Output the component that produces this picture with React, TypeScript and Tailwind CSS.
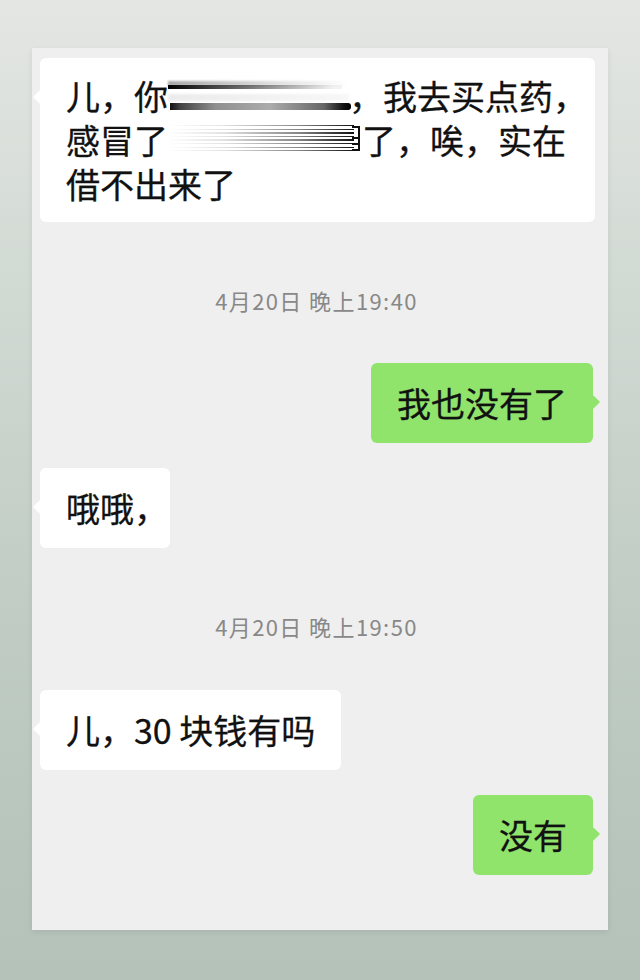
import type { ReactNode } from "react";

// smeared-out part of the first line (two motion-blurred strokes)
const SmearOne = () => (
  <span className="relative inline-block h-[44px] w-[181px] align-top">
    <span className="absolute left-0 top-[7px] h-[5px] w-full bg-[linear-gradient(90deg,rgba(0,0,0,0.35)_0%,rgba(0,0,0,0.12)_60%,transparent_100%)] blur-[1px]" />
    <span className="absolute left-0 top-[11px] h-[4px] w-[96%] bg-[linear-gradient(90deg,#000_0%,#333_20%,rgba(0,0,0,0.4)_60%,rgba(0,0,0,0.05)_95%)] blur-[0.4px]" />
    <span className="absolute left-0 top-[20px] h-[7px] w-full bg-[linear-gradient(90deg,rgba(0,0,0,0.08)_0%,rgba(0,0,0,0.03)_100%)] blur-[1px]" />
    <span className="absolute left-[2px] top-[29px] h-[7px] w-full rounded-r-[3px] bg-[linear-gradient(90deg,#111_0%,#444_6%,#8f8f8f_25%,#acacac_55%,#666_85%,#111_96%,#000_100%)] blur-[0.5px]" />
  </span>
);

// smeared-out part of the second line (thin horizontal streaks)
const SmearTwo = () => (
  <span className="relative inline-block h-[44px] w-[194px] align-top">
    <span className="absolute left-0 top-[7px] h-[26px] w-[186px] bg-[repeating-linear-gradient(180deg,#111_0px,#111_1.5px,transparent_1.5px,transparent_3.6px)] [mask-image:linear-gradient(90deg,transparent_0%,rgba(0,0,0,0.12)_30%,rgba(0,0,0,0.5)_70%,#000_100%)]" />
    <span className="absolute left-[184px] top-[8px] h-[25px] w-[8px] border-r-[2px] border-y-[2px] border-[#111] bg-[linear-gradient(180deg,transparent_0px,transparent_9px,#111_9px,#111_11px,transparent_11px,transparent_15px,#111_15px,#111_17px,transparent_17px)]" />
  </span>
);

const Bubble = ({
  side,
  children,
  className = "",
}: {
  side: "left" | "right";
  children: ReactNode;
  className?: string;
}) => {
  const green = side === "right";
  return (
    <div className={`flex ${green ? "justify-end" : "justify-start"}`}>
      <div
        className={`relative rounded-[6px] px-[26px] text-[34px] leading-[44px] text-[#111] [-webkit-text-stroke:0.3px_#111] ${
          green ? "bg-[#90e46c]" : "bg-white"
        } ${className}`}
      >
        <span
          className={`absolute top-[39px] h-[10px] w-[10px] -translate-y-1/2 rotate-45 rounded-[1px] ${
            green ? "right-[-5px] bg-[#90e46c]" : "left-[-5px] bg-white"
          }`}
        />
        <div className="relative whitespace-nowrap">{children}</div>
      </div>
    </div>
  );
};

const Stamp = ({ text, className = "" }: { text: string; className?: string }) => (
  <div className={`text-center text-[22px] leading-[24px] tracking-[1.4px] text-[#888] ${className}`}>
    {text}
  </div>
);

export default function App() {
  return (
    <div className="h-[980px] w-[640px] overflow-hidden bg-[linear-gradient(180deg,#e4e6e3_0%,#d2dad4_28%,#bfcbc3_65%,#b4c2b9_100%)] px-[32px] pt-[48px] font-['Noto_Sans_CJK_SC','Noto_Sans',sans-serif]">
      <div className="flex h-[882px] w-[576px] flex-col bg-[#efefef] pl-[8px] pr-[15px] pt-[10px] shadow-[0_2px_6px_rgba(0,0,0,0.08)]">
        <Bubble side="left" className="w-[555px] py-[16px]">
          儿，你<SmearOne />，我去买点药，
          <br />
          感冒了<SmearTwo />了，唉，实在
          <br />
          借不出来了
        </Bubble>

        <Stamp text="4月20日 晚上19:40" className="mt-[66px]" />

        <div className="mt-[51px]">
          <Bubble side="right" className="py-[18px]">
            我也没有了
          </Bubble>
        </div>

        <div className="mt-[25px]">
          <Bubble side="left" className="py-[18px]">
            哦哦<span className="inline-block w-[10px]">，</span>
          </Bubble>
        </div>

        <Stamp text="4月20日 晚上19:50" className="mt-[66px]" />

        <div className="mt-[52px]">
          <Bubble side="left" className="py-[18px]">
            儿，30 块钱有吗
          </Bubble>
        </div>

        <div className="mt-[25px]">
          <Bubble side="right" className="py-[18px]">
            没有
          </Bubble>
        </div>
      </div>
    </div>
  );
}
